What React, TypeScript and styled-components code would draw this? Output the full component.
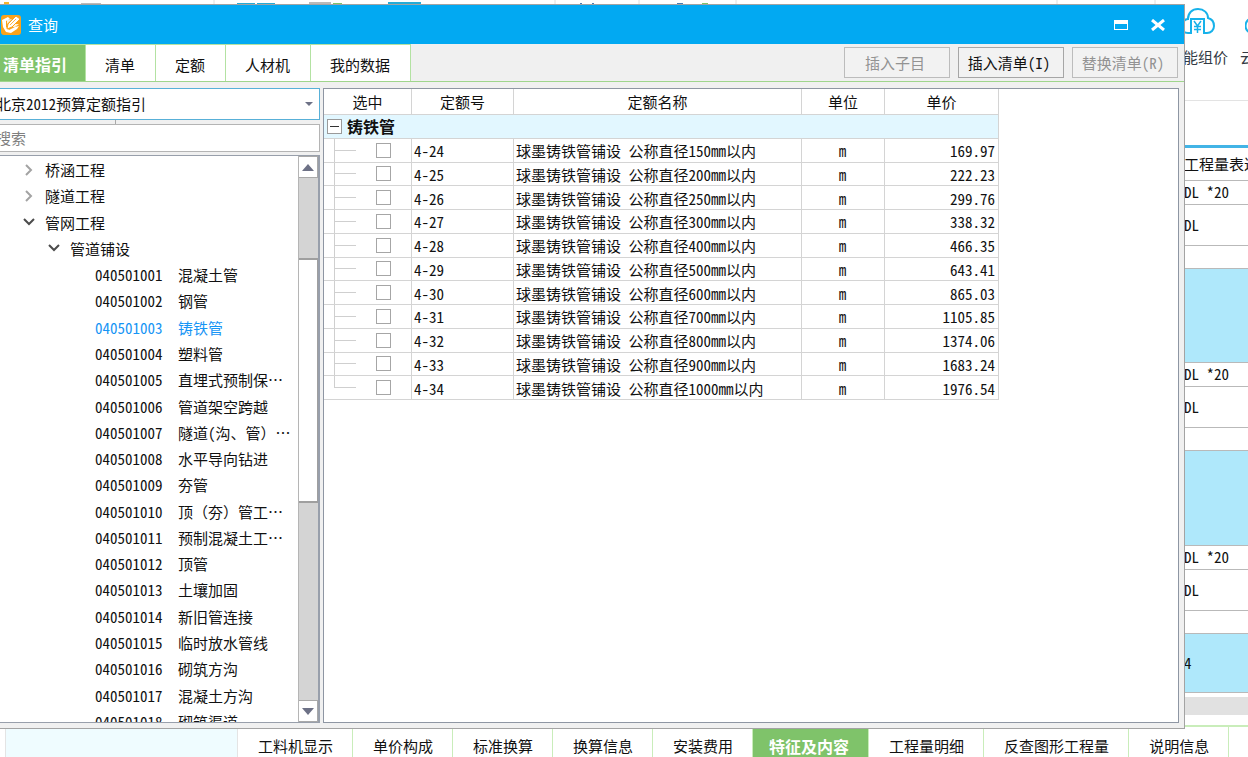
import React from 'react';
import styled, { createGlobalStyle, css } from 'styled-components';

const GlobalStyle = createGlobalStyle`
  *, *::before, *::after { box-sizing: border-box; }
  html, body { margin: 0; height: 100%; background: #fff; }
  body, button, input, select {
    font-family: "Noto Sans CJK SC", "Liberation Sans", sans-serif;
    font-size: 15px;
    line-height: 20px;
    color: #111;
  }
`;

/* Latin letters and digits take half the width of a Chinese character. */
const halfWidth = css`
  font-feature-settings: 'hwid' 1;
`;

/* ---------- application behind the dialog ---------- */

const Desktop = styled.div`
  position: relative;
  display: flex;
  flex-direction: column;
  height: 100vh;
  min-height: 640px;
  overflow: hidden;
  background: #fff;
`;

const Ribbon = styled.header`
  display: flex;
  justify-content: space-between;
  flex: none;
  height: 101px;
  border-bottom: 1px solid #e3e3e3;
`;

const RibbonScraps = styled.svg`
  display: block;
  flex: none;
  width: 1168px;
  height: 4px;
`;

const RibbonTools = styled.div`
  display: flex;
  flex: none;
  align-items: flex-start;
  gap: 12px;
  width: 80px;
  padding-top: 5px;
  overflow: hidden;
`;

const RibbonTool = styled.button`
  display: flex;
  flex: none;
  flex-direction: column;
  align-items: center;
  gap: 12px;
  padding: 0;
  border: 0;
  background: none;
  color: #333a44;
  white-space: nowrap;
`;

const Sheet = styled.div`
  display: flex;
  flex: 1;
  flex-direction: column;
  align-items: flex-end;
  margin-top: 44px;
  border-top: 3px solid #42b4e6;
`;

const SheetTable = styled.table`
  width: 65px;
  border-collapse: collapse;
  table-layout: fixed;
  white-space: nowrap;

  th, td {
    padding: 0 0 0 1px;
    border-bottom: 1px solid #b9b9b9;
    font-weight: 400;
    text-align: left;
    overflow: hidden;
    ${halfWidth}
  }
`;

const SheetRow = styled.tr<{ $height: number; $filled?: boolean }>`
  height: ${(p) => p.$height}px;
  background: ${(p) => (p.$filled ? '#afe8fb' : '#fff')};
`;

const SheetScroll = styled.div`
  width: 65px;
  height: 18px;
  margin-top: 4px;
  background: #e1e1e1;
`;

const DetailTabs = styled.nav`
  display: flex;
  flex: none;
  height: 32px;
  padding-left: 5px;
  border-top: 2px solid #c9edba;
  overflow: hidden;
`;

const DetailGap = styled.div`
  flex: none;
  width: 233px;
  border-left: 1px solid #e4e4e4;
  border-right: 1px solid #e4e4e4;
  background: #effcff;
`;

const DetailTab = styled.button<{ $active?: boolean }>`
  display: flex;
  flex: none;
  align-items: flex-end;
  justify-content: center;
  padding: ${(p) => (p.$active ? '0 19px 1px 16px' : '0 19px 1px 20px')};
  border: 0;
  border-right: 1px solid #c9edba;
  background: ${(p) => (p.$active ? '#7fc36a' : '#fff')};
  color: ${(p) => (p.$active ? '#fff' : '#111')};
  font-size: ${(p) => (p.$active ? 16 : 15)}px;
  font-weight: ${(p) => (p.$active ? 700 : 400)};
  white-space: nowrap;
`;

/* ---------- query dialog ---------- */

const Dialog = styled.section`
  position: absolute;
  inset: 4px 63px 28px -18px;
  display: flex;
  flex-direction: column;
  border: 1px solid #a3a3a3;
  background: #f0f0f0;
`;

const TitleBar = styled.header`
  display: flex;
  flex: none;
  align-items: center;
  gap: 7px;
  height: 39px;
  padding: 0 11px 0 18px;
  background: #02a9f2;
`;

const Title = styled.h1`
  flex: 1;
  margin: 0;
  color: #fff;
  font-size: 15px;
  font-weight: 400;
`;

const WindowButton = styled.button`
  display: flex;
  align-items: center;
  justify-content: center;
  width: 30px;
  height: 30px;
  padding: 0;
  border: 0;
  background: none;
`;

const Toolbar = styled.div`
  display: flex;
  flex: none;
  justify-content: space-between;
  height: 38px;
  border-bottom: 1px solid #9fd58c;
`;

const Tabs = styled.nav`
  display: flex;
`;

const Tab = styled.button<{ $active?: boolean }>`
  padding: ${(p) => (p.$active ? '1px 18px 0 20px' : '3px 20px 0 19px')};
  border: 0;
  border-top: 1px solid #b3e2a2;
  border-right: 1px solid #b3e2a2;
  background: ${(p) => (p.$active ? '#7fc36a' : '#fff')};
  color: ${(p) => (p.$active ? '#fff' : '#111')};
  font-size: ${(p) => (p.$active ? 16 : 15)}px;
  font-weight: ${(p) => (p.$active ? 700 : 400)};
  white-space: nowrap;
`;

const Actions = styled.div`
  display: flex;
  gap: 8px;
  padding: 3px 6px;
`;

const ActionButton = styled.button`
  width: 106px;
  height: 31px;
  padding: 0 4px 0 0;
  border: 1px solid #a6a6a6;
  background: #f2f2f2;
  ${halfWidth}

  &:disabled {
    border-color: #bcbcbc;
    color: #939393;
  }
`;

const Body = styled.div`
  display: flex;
  flex: 1;
  gap: 3px;
  min-height: 0;
  padding: 6px 5px 5px 6px;
`;

const Side = styled.aside`
  display: flex;
  flex: none;
  flex-direction: column;
  width: 331px;
`;

const SelectBox = styled.div`
  position: relative;
  flex: none;
  height: 32px;
`;

const GuideSelect = styled.select`
  width: 100%;
  height: 32px;
  padding: 0 24px 0 6px;
  border: 1px solid #58b0d8;
  border-radius: 0;
  background: #fff;
  appearance: none;
  ${halfWidth}
`;

const SelectArrow = styled.svg`
  position: absolute;
  top: 14px;
  right: 7px;
  pointer-events: none;
`;

const Splitter = styled.div`
  flex: none;
  width: 127px;
  height: 4px;
  border-right: 1px solid #a9a9a9;
`;

const SearchInput = styled.input`
  flex: none;
  width: 100%;
  height: 28px;
  padding: 0 6px 2px;
  border: 1px solid #b4b4b4;
  border-radius: 0;
  background: #fff;

  &::placeholder {
    color: #7f7f7f;
    opacity: 1;
  }
`;

const TreePanel = styled.div`
  display: flex;
  flex: 1;
  min-height: 0;
  margin-top: 3px;
  border: 1px solid #989fab;
  border-right-width: 2px;
  background: #fff;
  overflow: hidden;
`;

const Tree = styled.ul`
  display: grid;
  flex: 1;
  grid-auto-rows: 1fr;
  height: 578px;
  margin: 1px 0 0;
  padding: 0;
  list-style: none;
`;

const TreeItem = styled.li<{ $level: number; $selected?: boolean }>`
  display: flex;
  align-items: center;
  padding-left: ${(p) => 33 + p.$level * 25}px;
  color: ${(p) => (p.$selected ? '#1795f5' : '#111')};
  white-space: nowrap;
`;

const TreeToggle = styled.button`
  display: flex;
  width: 22px;
  height: 20px;
  align-items: center;
  padding: 0;
  border: 0;
  background: none;
`;

const ItemCode = styled.span`
  width: 105px;
  padding-left: 22px;
  ${halfWidth}
`;

const HalfParen = styled.span`
  ${halfWidth}
`;

const ScrollBar = styled.div`
  display: flex;
  flex: none;
  flex-direction: column;
  width: 20px;
  background: #d4d4d4;
  border-left: 1px solid #b5b5b5;
`;

const ScrollButton = styled.button`
  display: flex;
  flex: none;
  align-items: center;
  justify-content: center;
  height: 22px;
  padding: 0;
  border: 1px solid #a9a9a9;
  border-left: 0;
  background: #fff;
`;

const ScrollTrack = styled.div`
  display: grid;
  flex: 1;
  grid-template-rows: 80fr 245fr 197fr;
`;

const ScrollThumb = styled.div`
  grid-row: 2;
  border: solid #9f9f9f;
  border-width: 2px 1px 2px 0;
  background: #fff;
`;

const Main = styled.main`
  flex: 1;
  min-width: 0;
  border: 1px solid #8e96a3;
  background: #fff;
  overflow: hidden;
`;

const QuotaTable = styled.table`
  width: 675px;
  height: 311px;
  border-collapse: separate;
  border-spacing: 0;
  table-layout: fixed;
`;

const HeadCell = styled.th`
  height: 26px;
  padding: 1px 0 0;
  border-right: 1px solid #d4d4d4;
  border-bottom: 1px solid #d4d4d4;
  font-weight: 400;
  line-height: 22px;
`;

const GroupCell = styled.th`
  padding: 0 3px;
  border-right: 1px solid #d4d4d4;
  border-bottom: 1px solid #d4d4d4;
  background: #e2f7ff;
  text-align: left;
`;

const GroupLabel = styled.div`
  display: flex;
  align-items: center;
  gap: 5px;
  font-size: 16px;
  line-height: 22px;
`;

const ExpandButton = styled.button`
  display: flex;
  align-items: center;
  justify-content: center;
  width: 15px;
  height: 15px;
  padding: 0;
  border: 1px solid #9a9a9a;
  background: #fff;
`;

const Cell = styled.td<{ $align?: 'left' | 'center' | 'right' }>`
  padding: 2px 3px 0 2px;
  border-right: 1px solid #d4d4d4;
  border-bottom: 1px solid #d4d4d4;
  line-height: 20px;
  text-align: ${(p) => p.$align ?? 'left'};
  white-space: nowrap;
  ${halfWidth}
`;

const CheckCell = styled(Cell)<{ $last: boolean }>`
  padding: 0 0 0 52px;
  line-height: 0;
  background-image: linear-gradient(#cfcfcf, #cfcfcf), linear-gradient(#cfcfcf, #cfcfcf);
  background-repeat: no-repeat;
  background-size: 1px ${(p) => (p.$last ? '50%' : '100%')}, 22px 1px;
  background-position: 10px 0, 10px 50%;
`;

const CheckBox = styled.input`
  width: 15px;
  height: 15px;
  margin: 0;
  border: 1px solid #a6a6a6;
  background: #fff;
  appearance: none;
`;

/* ---------- data ---------- */

const tabs = ['清单指引', '清单', '定额', '人材机', '我的数据'];

const detailTabs = [
  '工料机显示',
  '单价构成',
  '标准换算',
  '换算信息',
  '安装费用',
  '特征及内容',
  '工程量明细',
  '反查图形工程量',
  '说明信息',
];

const branches = [
  { name: '桥涵工程', level: 0, open: false },
  { name: '隧道工程', level: 0, open: false },
  { name: '管网工程', level: 0, open: true },
  { name: '管道铺设', level: 1, open: true },
];

const items: [string, React.ReactNode][] = [
  ['040501001', '混凝土管'],
  ['040501002', '钢管'],
  ['040501003', '铸铁管'],
  ['040501004', '塑料管'],
  ['040501005', '直埋式预制保…'],
  ['040501006', '管道架空跨越'],
  ['040501007', <>隧道<HalfParen>(</HalfParen>沟、管）…</>],
  ['040501008', '水平导向钻进'],
  ['040501009', '夯管'],
  ['040501010', '顶（夯）管工…'],
  ['040501011', '预制混凝土工…'],
  ['040501012', '顶管'],
  ['040501013', '土壤加固'],
  ['040501014', '新旧管连接'],
  ['040501015', '临时放水管线'],
  ['040501016', '砌筑方沟'],
  ['040501017', '混凝土方沟'],
  ['040501018', '砌筑渠道'],
];

const quotas: [string, number, string][] = [
  ['4-24', 150, '169.97'],
  ['4-25', 200, '222.23'],
  ['4-26', 250, '299.76'],
  ['4-27', 300, '338.32'],
  ['4-28', 400, '466.35'],
  ['4-29', 500, '643.41'],
  ['4-30', 600, '865.03'],
  ['4-31', 700, '1105.85'],
  ['4-32', 800, '1374.06'],
  ['4-33', 900, '1683.24'],
  ['4-34', 1000, '1976.54'],
];

const sheetRows: { text: string; height: number; filled?: boolean }[] = [
  { text: 'DL *20', height: 24 },
  { text: 'DL', height: 41 },
  { text: '', height: 23 },
  { text: '', height: 94, filled: true },
  { text: 'DL *20', height: 24 },
  { text: 'DL', height: 41 },
  { text: '', height: 23 },
  { text: '', height: 95, filled: true },
  { text: 'DL *20', height: 24 },
  { text: 'DL', height: 41 },
  { text: '', height: 23 },
  { text: '4', height: 59, filled: true },
];

/* ---------- icons ---------- */

const AppIcon = () => (
  <svg width="20" height="20" viewBox="0 0 20 20" aria-hidden="true">
    <rect width="20" height="20" rx="3" fill="#fba31b" />
    <path d="M1 5 L7 2 L9 4 L5 6 L5 12 L8 15 L14 12 L18 11 L16 14 L10 18 L5 17 L2 12 Z" fill="#fff" />
    <path d="M6 5 L11 4 L6 9 Z M14 9 L18 9 L14 12 L11 12 Z" fill="#fff3dd" />
    <path d="M15 1 L19 4 L11 12 L6 14 L7 9 Z" fill="#fff" stroke="#fba31b" strokeWidth="1" />
    <path d="M9 10 L15 4" stroke="#fbb648" strokeWidth="1" />
  </svg>
);

const CloudPriceIcon = () => (
  <svg width="36" height="30" viewBox="0 0 36 30" fill="none" stroke="#17b2ea" strokeWidth="2" aria-hidden="true">
    <path d="M8 28 C4 28 2 25 2 21 C2 17 5 14 8 14 C8 8 12 4 18 4 C24 4 28 8 28 13 C32 14 34 17 34 21 C34 25 31 28 27 28 H24 V14 H11 V28 H6" />
    <path d="M14 16 L17.500 21 L21 16 M17.500 21 V28 M14 21.500 H21 M14 24.500 H21" strokeWidth="1.500" />
  </svg>
);

const CloudIcon = () => (
  <svg width="36" height="30" viewBox="0 0 36 30" fill="none" stroke="#17b2ea" strokeWidth="2" aria-hidden="true">
    <path d="M8 28 C-2 28 -2 14 8 13 C9 1 26 1 28 13 C37 14 36 28 27 28 Z" />
  </svg>
);

const Chevron = ({ open }: { open: boolean }) =>
  open ? (
    <svg width="12" height="9" viewBox="0 0 12 9" fill="none" stroke="#4c4c4c" strokeWidth="2" aria-hidden="true">
      <path d="M1 1 L6 6 L11 1" />
    </svg>
  ) : (
    <svg width="12" height="12" viewBox="0 0 12 12" fill="none" stroke="#a3a3a3" strokeWidth="2" aria-hidden="true">
      <path d="M3 1 L8 6 L3 11" />
    </svg>
  );

const Triangle = ({ up }: { up?: boolean }) => (
  <svg width="12" height="7" viewBox="0 0 12 7" fill="#6d7186" aria-hidden="true">
    <path d={up ? 'M6 0 L12 7 H0 Z' : 'M0 0 H12 L6 7 Z'} />
  </svg>
);

const Scraps = () => (
  <RibbonScraps viewBox="0 0 1168 4" aria-hidden="true">
    <path d="M4 4 V2 H9 V4 Z" fill="#f5b62e" />
    <path d="M81 3 H101 V4 H81 Z M309 2 H331 V4 H309 Z" fill="#bababa" />
    <path d="M237 3 H255 V4 H237 Z M257 3 H275 V4 H257 Z M388 2 H421 V4 H388 Z" fill="#26abd6" />
    <path d="M333 3 H342 V4 H333 Z M702 3 H708 V4 H702 Z" fill="#7fc36a" />
    <path d="M580 3 H582 V4 H580 Z M592 3 H594 V4 H592 Z M677 3 H683 V4 H677 Z" fill="#4a7cb0" />
    <path d="M214 0 V4 M555 0 V4 M639 0 V4 M736 0 V4 M1057 0 V4 M1155 0 V4" stroke="#dedede" />
  </RibbonScraps>
);

/* ---------- page ---------- */

export default function App() {
  return (
    <Desktop>
      <GlobalStyle />

      <Ribbon>
        <Scraps />
        <RibbonTools>
          <RibbonTool><CloudPriceIcon />智能组价</RibbonTool>
          <RibbonTool><CloudIcon />云检查</RibbonTool>
        </RibbonTools>
      </Ribbon>

      <Sheet>
        <SheetTable>
          <thead>
            <SheetRow $height={32}><th scope="col">工程量表达式</th></SheetRow>
          </thead>
          <tbody>
            {sheetRows.map((row, i) => (
              <SheetRow key={i} $height={row.height} $filled={row.filled}>
                <td>{row.text}</td>
              </SheetRow>
            ))}
          </tbody>
        </SheetTable>
        <SheetScroll />
      </Sheet>

      <DetailTabs aria-label="明细">
        <DetailGap />
        {detailTabs.map((name) => (
          <DetailTab key={name} $active={name === '特征及内容'}>{name}</DetailTab>
        ))}
      </DetailTabs>

      <Dialog role="dialog" aria-labelledby="dialog-title">
        <TitleBar>
          <AppIcon />
          <Title id="dialog-title">查询</Title>
          <WindowButton aria-label="最大化">
            <svg width="14" height="10" viewBox="0 0 14 10" aria-hidden="true">
              <path d="M0 0 H14 V10 H0 Z M1 4 V9 H13 V4 Z" fill="#fff" fillRule="evenodd" />
            </svg>
          </WindowButton>
          <WindowButton aria-label="关闭">
            <svg width="14" height="12" viewBox="0 0 14 12" aria-hidden="true">
              <path d="M1 1 L13 11 M13 1 L1 11" stroke="#fff" strokeWidth="3" />
            </svg>
          </WindowButton>
        </TitleBar>

        <Toolbar>
          <Tabs>
            {tabs.map((name, i) => (
              <Tab key={name} $active={i === 0}>{name}</Tab>
            ))}
          </Tabs>
          <Actions>
            <ActionButton disabled>插入子目</ActionButton>
            <ActionButton>插入清单(I)</ActionButton>
            <ActionButton disabled>替换清单(R)</ActionButton>
          </Actions>
        </Toolbar>

        <Body>
          <Side>
            <SelectBox>
              <GuideSelect aria-label="定额指引">
                <option>北京2012预算定额指引</option>
              </GuideSelect>
              <SelectArrow width="8" height="4" viewBox="0 0 8 4" aria-hidden="true">
                <path d="M0 0 H8 L4 4 Z" fill="#6d7186" />
              </SelectArrow>
            </SelectBox>
            <Splitter />
            <SearchInput type="text" placeholder="搜索" aria-label="搜索" />
            <TreePanel>
              <Tree>
                {branches.map((b) => (
                  <TreeItem key={b.name} $level={b.level}>
                    <TreeToggle aria-label={b.name} aria-expanded={b.open}>
                      <Chevron open={b.open} />
                    </TreeToggle>
                    {b.name}
                  </TreeItem>
                ))}
                {items.map(([code, name]) => (
                  <TreeItem key={code} $level={2} $selected={code === '040501003'}>
                    <ItemCode>{code}</ItemCode>
                    <span>{name}</span>
                  </TreeItem>
                ))}
              </Tree>
              <ScrollBar>
                <ScrollButton aria-label="向上滚动"><Triangle up /></ScrollButton>
                <ScrollTrack><ScrollThumb /></ScrollTrack>
                <ScrollButton aria-label="向下滚动"><Triangle /></ScrollButton>
              </ScrollBar>
            </TreePanel>
          </Side>

          <Main>
            <QuotaTable>
              <colgroup>
                <col width="88" />
                <col width="102" />
                <col width="288" />
                <col width="83" />
                <col width="114" />
              </colgroup>
              <thead>
                <tr>
                  {['选中', '定额号', '定额名称', '单位', '单价'].map((name) => (
                    <HeadCell key={name} scope="col">{name}</HeadCell>
                  ))}
                </tr>
              </thead>
              <tbody>
                <tr>
                  <GroupCell colSpan={5} scope="rowgroup">
                    <GroupLabel>
                      <ExpandButton aria-label="折叠" aria-expanded="true">
                        <svg width="9" height="1" viewBox="0 0 9 1" aria-hidden="true">
                          <rect width="9" height="1" fill="#333" />
                        </svg>
                      </ExpandButton>
                      铸铁管
                    </GroupLabel>
                  </GroupCell>
                </tr>
                {quotas.map(([code, diameter, price], i) => (
                  <tr key={code}>
                    <CheckCell $last={i === quotas.length - 1}>
                      <CheckBox type="checkbox" aria-label={code} />
                    </CheckCell>
                    <Cell>{code}</Cell>
                    <Cell>{`球墨铸铁管铺设 公称直径${diameter}mm以内`}</Cell>
                    <Cell $align="center">m</Cell>
                    <Cell $align="right">{price}</Cell>
                  </tr>
                ))}
              </tbody>
            </QuotaTable>
          </Main>
        </Body>
      </Dialog>
    </Desktop>
  );
}
